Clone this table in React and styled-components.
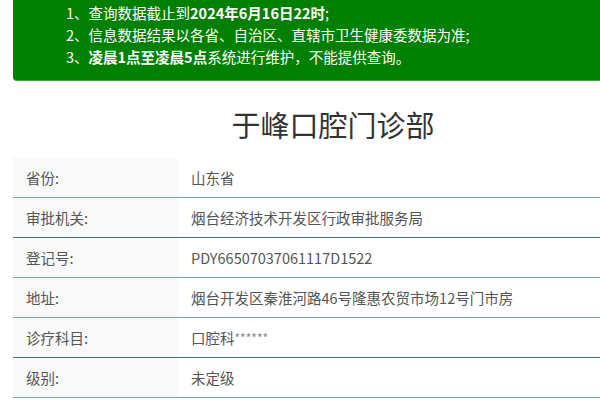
import styled, { createGlobalStyle } from "styled-components"

const GlobalStyle = createGlobalStyle`
    html, body {
        margin: 0;
        padding: 0;
        overflow: hidden;
        background: #fff;
        font-family: "Noto Sans CJK SC", "Noto Sans", sans-serif;
    }
`

const Page = styled.div`
    width: 640px;
    margin-left: 13px;
`

const Notice = styled.ol`
    list-style: none;
    margin: 0;
    padding: 2px 0 12px 53px;
    background: #008000;
    border-bottom: 1px solid #4aa34a;
    border-radius: 0 0 4px 4px;
    color: #fff;
    font-size: 14.5px;
    line-height: 22px;
`

const NoticeItem = styled.li`
    white-space: nowrap;

    b {
        font-weight: 700;
    }
`

const Title = styled.h1`
    margin: 22px 0 13px;
    text-align: center;
    font-size: 29px;
    font-weight: 400;
    line-height: 42px;
    color: #333;
`

const Table = styled.div`
    display: flex;
    flex-direction: column;
`

const Row = styled.div`
    display: grid;
    grid-template-columns: 165px 1fr;
    height: 39px;
    border-bottom: 1px solid ${p => p.$dark ? "#3d7a6b" : "#74b0a2"};
    font-size: 14.5px;
    color: #555;
`

const Label = styled.div`
    display: flex;
    align-items: center;
    padding-left: 13px;
    background: #f9f9f9;
`

const Value = styled.div`
    display: flex;
    align-items: center;
    padding-left: 13px;
`

const Stars = styled.span`
    font-size: 12px;
    color: #888;
    align-self: flex-start;
    margin-top: 11px;
`

const rows = [
    { label: "省份:", value: "山东省" },
    { label: "审批机关:", value: "烟台经济技术开发区行政审批服务局", dark: true },
    { label: "登记号:", value: "PDY66507037061117D1522" },
    { label: "地址:", value: "烟台开发区秦淮河路46号隆惠农贸市场12号门市房" },
    { label: "诊疗科目:", value: "口腔科", stars: "******", dark: true },
    { label: "级别:", value: "未定级" },
]

export default function App() {
    return (
        <>
            <GlobalStyle />
            <Page>
                <Notice>
                    <NoticeItem>1、查询数据截止到<b>2024年6月16日22时</b>;</NoticeItem>
                    <NoticeItem>2、信息数据结果以各省、自治区、直辖市卫生健康委数据为准;</NoticeItem>
                    <NoticeItem>3、<b>凌晨1点至凌晨5点</b>系统进行维护，不能提供查询。</NoticeItem>
                </Notice>
                <Title>于峰口腔门诊部</Title>
                <Table>
                    {rows.map(r => (
                        <Row key={r.label} $dark={r.dark}>
                            <Label>{r.label}</Label>
                            <Value>
                                {r.value}
                                {r.stars && <Stars>{r.stars}</Stars>}
                            </Value>
                        </Row>
                    ))}
                </Table>
            </Page>
        </>
    )
}
